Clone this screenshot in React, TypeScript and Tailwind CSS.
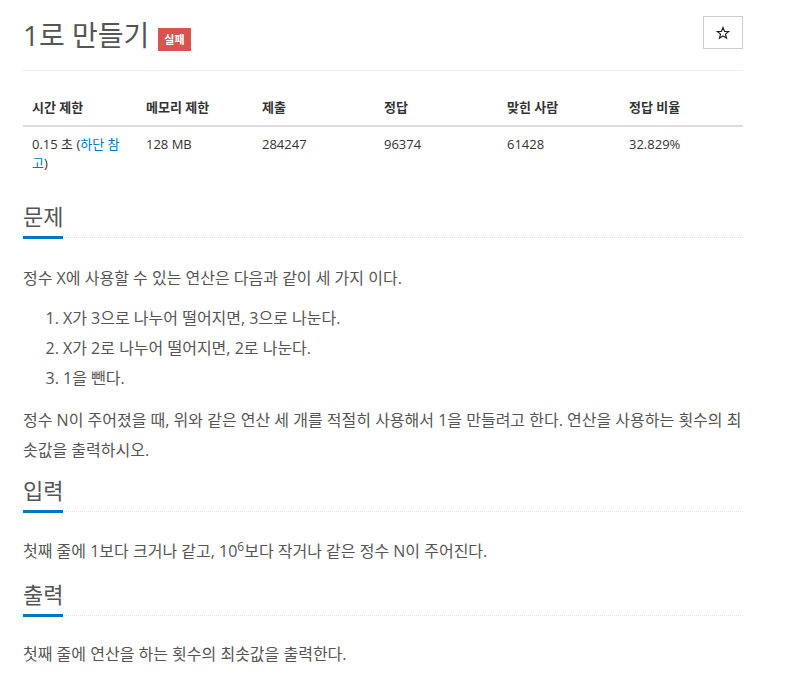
import * as React from "react";

const columns = [
  { title: "시간 제한", width: "w-[114px]" },
  { title: "메모리 제한", width: "w-[116px]" },
  { title: "제출", width: "w-[122px]" },
  { title: "정답", width: "w-[123px]" },
  { title: "맞힌 사람", width: "w-[122px]" },
  { title: "정답 비율", width: "w-[123px]" }
];

function Headline({ title, className }: { title: string; className?: string }) {
  return (
    <div className={`flex border-b border-dotted border-[#e4e4e4] ${className ?? ""}`}>
      <h2 className="-mb-[2px] border-b-[3px] border-[#0076c0] pb-[7px] text-[22px] leading-[26px] font-normal text-[#555]">
        {title}
      </h2>
    </div>
  );
}

function StarOutline() {
  return (
    <svg width="14" height="14" viewBox="0 0 24 24" fill="none" stroke="#222" strokeWidth="2" strokeLinejoin="miter">
      <polygon points="12,2.5 14.6,9.2 21.8,9.5 16.2,14 18.1,21 12,17 5.9,21 7.8,14 2.2,9.5 9.4,9.2" />
    </svg>
  );
}

export default function App() {
  return (
    <div className="min-h-screen bg-white font-['Open_Sans','Noto_Sans_CJK_KR',sans-serif] text-[#555]">
      <div className="ml-[23px] w-[720px] pt-[16px]">
        <div className="flex items-start justify-between">
          <div className="flex items-start">
            <h1 className="text-[28px] leading-[38px] font-normal text-[#555]">1로 만들기</h1>
            <span className="ml-[9px] mt-[12px] h-[23px] bg-[#d9534f] px-[6px] text-[11px] leading-[23px] font-bold text-white">
              실패
            </span>
          </div>
          <button className="flex h-[33px] w-[40px] items-center justify-center border border-[#ccc] bg-white">
            <StarOutline />
          </button>
        </div>

        <div className="mt-[16px] border-t border-[#eee]" />

        <table className="mt-[19px] w-full table-fixed border-collapse text-[13px] text-[#333]">
          <thead>
            <tr className="border-b-2 border-[#ddd]">
              {columns.map((c) => (
                <th key={c.title} className={`${c.width} py-[8px] pl-[9px] pr-[8px] text-left leading-[19px] font-bold`}>
                  {c.title}
                </th>
              ))}
            </tr>
          </thead>
          <tbody>
            <tr>
              <td className="py-[8px] pl-[9px] pr-[8px] align-top leading-[19px]">
                0.15 초 (<span className="text-[#0076c0]">하단 참고</span>)
              </td>
              <td className="py-[8px] pl-[9px] pr-[8px] align-top leading-[19px]">128 MB</td>
              <td className="py-[8px] pl-[9px] pr-[8px] align-top leading-[19px]">284247</td>
              <td className="py-[8px] pl-[9px] pr-[8px] align-top leading-[19px]">96374</td>
              <td className="py-[8px] pl-[9px] pr-[8px] align-top leading-[19px]">61428</td>
              <td className="py-[8px] pl-[9px] pr-[8px] align-top leading-[19px]">32.829%</td>
            </tr>
          </tbody>
        </table>

        <Headline title="문제" className="mt-[22px]" />
        <div className="text-[16px] leading-[30px]">
          <p className="mt-[25px] mb-[10px]">정수 X에 사용할 수 있는 연산은 다음과 같이 세 가지 이다.</p>
          <ol className="mb-[12px] list-decimal pl-[40px]">
            <li>X가 3으로 나누어 떨어지면, 3으로 나눈다.</li>
            <li>X가 2로 나누어 떨어지면, 2로 나눈다.</li>
            <li>1을 뺀다.</li>
          </ol>
          <p className="mb-[10px]">
            정수 N이 주어졌을 때, 위와 같은 연산 세 개를 적절히 사용해서 1을 만들려고 한다. 연산을 사용하는 횟수의 최솟값을 출력하시오.
          </p>
        </div>

        <Headline title="입력" className="mt-[12px]" />
        <div className="text-[16px] leading-[30px]">
          <p className="mt-[24px] mb-[10px]">
            첫째 줄에 1보다 크거나 같고, 10<sup>6</sup>보다 작거나 같은 정수 N이 주어진다.
          </p>
        </div>

        <Headline title="출력" className="mt-[15px]" />
        <div className="text-[16px] leading-[30px]">
          <p className="mt-[23px] mb-[10px]">첫째 줄에 연산을 하는 횟수의 최솟값을 출력한다.</p>
        </div>
      </div>
    </div>
  );
}
